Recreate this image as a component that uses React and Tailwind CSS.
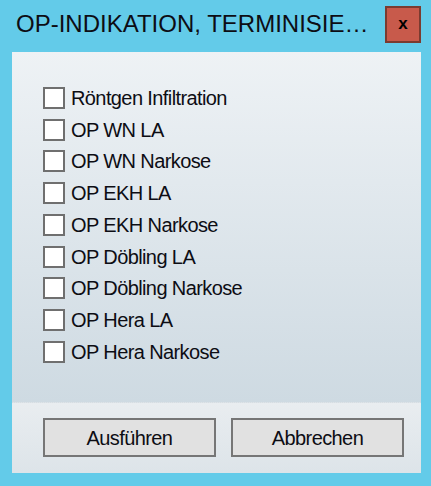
const items = [
  'Röntgen Infiltration',
  'OP WN LA',
  'OP WN Narkose',
  'OP EKH LA',
  'OP EKH Narkose',
  'OP Döbling LA',
  'OP Döbling Narkose',
  'OP Hera LA',
  'OP Hera Narkose',
]

export default function App() {
  return (
    <div className="w-[431px] h-[486px] bg-[#63cbe9] flex flex-col font-['Liberation_Sans',Arial,sans-serif] text-[#0d0d14]">
      {/* title bar */}
      <div className="h-[52px] flex items-start shrink-0">
        <div className="pl-[16px] pt-[12px] text-[24px] leading-none whitespace-nowrap">
          OP-INDIKATION, TERMINISIE…
        </div>
        <button className="ml-auto mt-[6px] mr-[10px] w-[36px] h-[37px] bg-[#c85a4b] border-2 border-[#7b3b30] flex items-center justify-center">
          <span className="text-[17px] font-bold leading-none text-black -mt-[2px]">x</span>
        </button>
      </div>

      {/* client area */}
      <div className="ml-[12px] mr-[10px] h-[421px] flex flex-col">
        <div className="h-[350px] bg-gradient-to-b from-[#eef2f5] to-[#cedae2] pt-[30px] pl-[31px]">
          {items.map((label) => (
            <label key={label} className="h-[31.75px] flex items-center">
              <span className="w-[22px] h-[22px] bg-white border-2 border-[#6f6f6f] shrink-0" />
              <span className="ml-[6px] text-[20px] leading-[22px] tracking-[-0.6px] whitespace-nowrap">{label}</span>
            </label>
          ))}
        </div>
        <div className="flex-1 bg-gradient-to-b from-[#e9edf0] to-[#dde4e9] border-t border-dotted border-[#d6dde2] pt-[15px] pl-[31px] flex gap-[15px]">
          <button className="w-[173px] h-[39px] bg-[#e1e1e1] border-2 border-[#767676] text-[20px] tracking-[-0.6px] leading-none">
            Ausführen
          </button>
          <button className="w-[173px] h-[39px] bg-[#e1e1e1] border-2 border-[#767676] text-[20px] tracking-[-0.6px] leading-none">
            Abbrechen
          </button>
        </div>
      </div>
    </div>
  )
}
